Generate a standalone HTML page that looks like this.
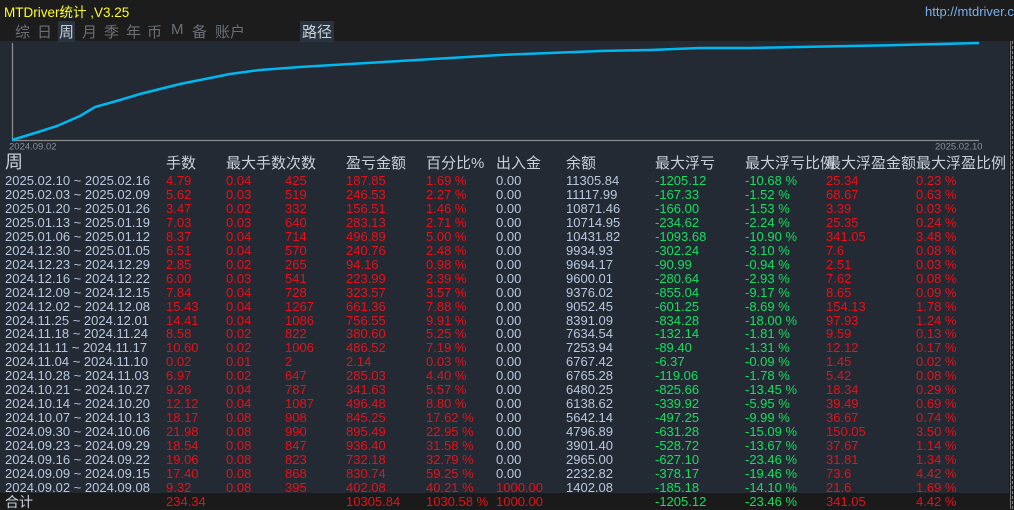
<!DOCTYPE html>
<html><head><meta charset="utf-8"><style>
body{margin:0;width:1014px;height:509px;background:#1c1c1c;overflow:hidden;position:relative;font-family:"Liberation Sans","Noto Sans CJK SC",sans-serif;}
.a{position:absolute;white-space:nowrap}
#top{left:0;top:0;width:1014px;height:41px;background:#1c1c1c}
#panel{left:0;top:41px;width:1009px;height:452px;background:#242a33}
#tot{left:0;top:493px;width:1009px;height:16px;background:#1a1a1a}
.r{position:absolute;left:0;height:14px;font-size:13px;line-height:14px}
.r span{position:absolute;white-space:nowrap}
.d{color:#b8c8e0}.R{color:#e8101a}.G{color:#10e060}.W{color:#b8c8e0}
.h{color:#c8d0d8;font-size:15px}
.tab{position:absolute;top:21px;font-size:15px;color:#6a7078}
</style></head><body>
<div class="a" id="top"></div>
<div class="a" id="panel"></div>
<div class="a" id="tot"></div>
<div class="a" style="left:1010px;top:41px;width:1px;height:468px;background:#777"></div>
<div class="a" style="left:1012px;top:41px;width:1px;height:468px;border-left:1px dashed #888"></div>
<div class="a" style="left:4px;top:1px;font-size:13.5px;color:#ffff20">MTDriver统计 ,V3.25</div>
<div class="a" style="left:925px;top:4px;font-size:13px;color:#7ab0f0">http://mtdriver.c</div>
<span class="tab" style="left:15px">综</span><span class="tab" style="left:37px">日</span>
<span class="tab" style="left:58px;background:#2a3440;color:#c8d0d8;padding:0 1px">周</span>
<span class="tab" style="left:82px">月</span><span class="tab" style="left:104px">季</span><span class="tab" style="left:126px">年</span><span class="tab" style="left:147px">币</span><span class="tab" style="left:171px">M</span><span class="tab" style="left:192px">备</span><span class="tab" style="left:215px">账户</span>
<span class="tab" style="left:300px;background:#2a3440;color:#c8d0d8;padding:0 2px">路径</span>
<svg class="a" style="left:0;top:41px" width="1009" height="110">
<line x1="12.5" y1="2" x2="12.5" y2="99" stroke="#8a8a8a" stroke-width="1.3"/>
<line x1="12" y1="99.5" x2="979" y2="99.5" stroke="#8a8a8a" stroke-width="1.3"/>
<polyline fill="none" stroke="#00b8f0" stroke-width="2.5" points="12,99 35,92 57,85 80,75 95,66 120,59 140,53 160,48 180,43 205,38 230,33 260,29 300,26 350,23 400,20 450,17 500,14 550,12 600,10 650,9 700,7 750,7 800,6 850,5 900,4 940,3 979,2"/>
<text x="9" y="108.5" fill="#8a9098" font-size="9.5" font-family="Liberation Sans">2024.09.02</text>
<text x="935" y="108.5" fill="#8a9098" font-size="9.5" font-family="Liberation Sans">2025.02.10</text>
</svg>
<div class="r" style="top:157px;height:18px">
<span class="h" style="left:5px;font-size:18px;top:-2px">周</span><span class="h" style="left:166px">手数</span><span class="h" style="left:226px">最大手数次数</span><span class="h" style="left:346px">盈亏金额</span><span class="h" style="left:426px">百分比%</span><span class="h" style="left:496px">出入金</span><span class="h" style="left:566px">余额</span><span class="h" style="left:655px">最大浮亏</span><span class="h" style="left:745px">最大浮亏比例</span><span class="h" style="left:826px">最大浮盈金额</span><span class="h" style="left:916px">最大浮盈比例</span>
</div>
<div id="rows"></div>
<script>
var D=[
["2025.02.10 ~ 2025.02.16","4.79","0.04","425","187.85","1.69 %","0.00","11305.84","-1205.12","-10.68 %","25.34","0.23 %"],
["2025.02.03 ~ 2025.02.09","5.62","0.03","519","246.53","2.27 %","0.00","11117.99","-167.33","-1.52 %","68.67","0.63 %"],
["2025.01.20 ~ 2025.01.26","3.47","0.02","332","156.51","1.46 %","0.00","10871.46","-166.00","-1.53 %","3.39","0.03 %"],
["2025.01.13 ~ 2025.01.19","7.03","0.03","640","283.13","2.71 %","0.00","10714.95","-234.62","-2.24 %","25.35","0.24 %"],
["2025.01.06 ~ 2025.01.12","8.37","0.04","714","496.89","5.00 %","0.00","10431.82","-1093.68","-10.90 %","341.05","3.48 %"],
["2024.12.30 ~ 2025.01.05","6.51","0.04","570","240.76","2.48 %","0.00","9934.93","-302.24","-3.10 %","7.6","0.08 %"],
["2024.12.23 ~ 2024.12.29","2.85","0.02","265","94.16","0.98 %","0.00","9694.17","-90.99","-0.94 %","2.51","0.03 %"],
["2024.12.16 ~ 2024.12.22","6.00","0.03","541","223.99","2.39 %","0.00","9600.01","-280.64","-2.93 %","7.62","0.08 %"],
["2024.12.09 ~ 2024.12.15","7.84","0.04","728","323.57","3.57 %","0.00","9376.02","-855.04","-9.17 %","8.65","0.09 %"],
["2024.12.02 ~ 2024.12.08","15.43","0.04","1267","661.36","7.88 %","0.00","9052.45","-601.25","-8.69 %","154.13","1.78 %"],
["2024.11.25 ~ 2024.12.01","14.41","0.04","1086","756.55","9.91 %","0.00","8391.09","-834.28","-18.00 %","97.93","1.24 %"],
["2024.11.18 ~ 2024.11.24","8.58","0.02","822","380.60","5.25 %","0.00","7634.54","-132.14","-1.81 %","9.59","0.13 %"],
["2024.11.11 ~ 2024.11.17","10.60","0.02","1006","486.52","7.19 %","0.00","7253.94","-89.40","-1.31 %","12.12","0.17 %"],
["2024.11.04 ~ 2024.11.10","0.02","0.01","2","2.14","0.03 %","0.00","6767.42","-6.37","-0.09 %","1.45","0.02 %"],
["2024.10.28 ~ 2024.11.03","6.97","0.02","647","285.03","4.40 %","0.00","6765.28","-119.06","-1.78 %","5.42","0.08 %"],
["2024.10.21 ~ 2024.10.27","9.26","0.04","787","341.63","5.57 %","0.00","6480.25","-825.66","-13.45 %","18.34","0.29 %"],
["2024.10.14 ~ 2024.10.20","12.12","0.04","1087","496.48","8.80 %","0.00","6138.62","-339.92","-5.95 %","39.49","0.69 %"],
["2024.10.07 ~ 2024.10.13","18.17","0.08","908","845.25","17.62 %","0.00","5642.14","-497.25","-9.99 %","36.67","0.74 %"],
["2024.09.30 ~ 2024.10.06","21.98","0.08","990","895.49","22.95 %","0.00","4796.89","-631.28","-15.09 %","150.05","3.50 %"],
["2024.09.23 ~ 2024.09.29","18.54","0.08","847","936.40","31.58 %","0.00","3901.40","-528.72","-13.67 %","37.67","1.14 %"],
["2024.09.16 ~ 2024.09.22","19.06","0.08","823","732.18","32.79 %","0.00","2965.00","-627.10","-23.46 %","31.81","1.34 %"],
["2024.09.09 ~ 2024.09.15","17.40","0.08","868","830.74","59.25 %","0.00","2232.82","-378.17","-19.46 %","73.6","4.42 %"],
["2024.09.02 ~ 2024.09.08","9.32","0.08","395","402.08","40.21 %","1000.00","1402.08","-185.18","-14.10 %","21.6","1.69 %"]];
var X=[5,166,226,285,346,426,496,566,655,745,826,916];
var C=["d","R","R","R","R","R","W","W","G","G","R","R"];
var h="";
D.forEach(function(r,i){
 h+='<div class="r" style="top:'+(174+i*13.95)+'px">';
 r.forEach(function(v,j){var c=C[j];if(j==6&&v!="0.00")c="R";h+='<span class="'+c+'" style="left:'+X[j]+'px">'+v+'</span>';});
 h+='</div>';});
h+='<div class="r" style="top:495px"><span class="h" style="left:5px;font-size:14px">合计</span><span class="R" style="left:166px">234.34</span><span class="R" style="left:346px">10305.84</span><span class="R" style="left:426px">1030.58 %</span><span class="R" style="left:496px">1000.00</span><span class="G" style="left:655px">-1205.12</span><span class="G" style="left:745px">-23.46 %</span><span class="R" style="left:826px">341.05</span><span class="R" style="left:916px">4.42 %</span></div>';
document.getElementById("rows").innerHTML=h;
</script>
</body></html>
